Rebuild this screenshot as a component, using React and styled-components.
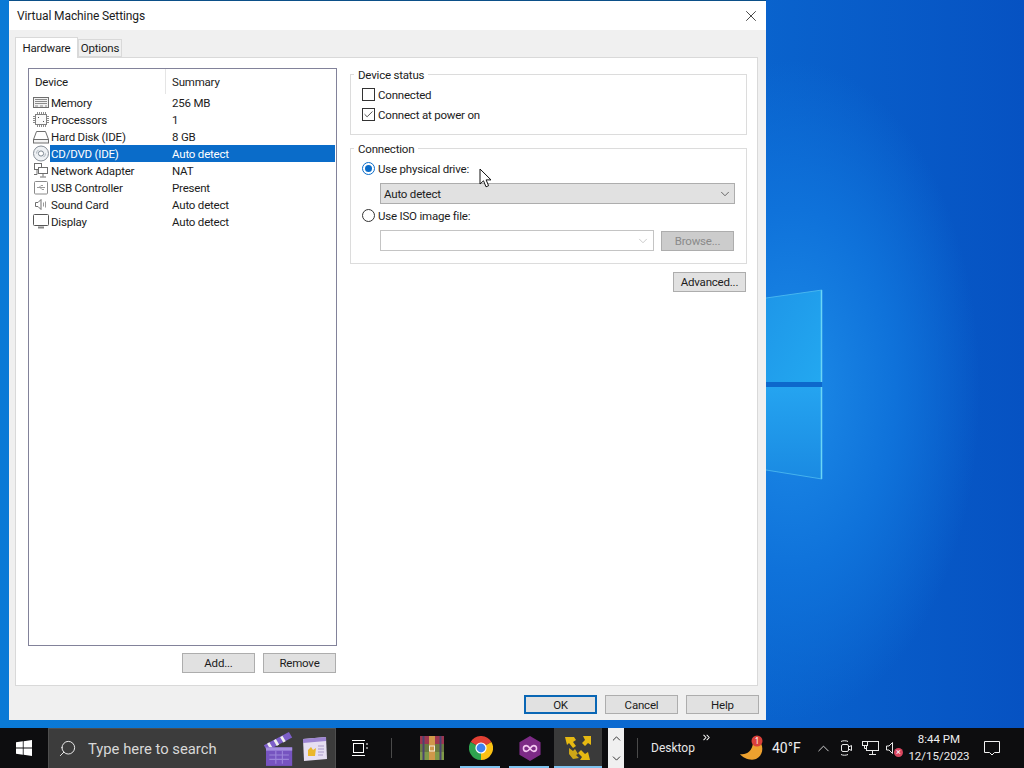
import React from "react";
import styled, { createGlobalStyle } from "styled-components";
import { ChevronDown, ChevronUp, ChevronsRight, Search, X, Check } from "lucide-react";

const devices = [
  { id: "memory", name: "Memory", summary: "256 MB" },
  { id: "cpu", name: "Processors", summary: "1" },
  { id: "disk", name: "Hard Disk (IDE)", summary: "8 GB" },
  { id: "cd", name: "CD/DVD (IDE)", summary: "Auto detect", selected: true },
  { id: "net", name: "Network Adapter", summary: "NAT" },
  { id: "usb", name: "USB Controller", summary: "Present" },
  { id: "sound", name: "Sound Card", summary: "Auto detect" },
  { id: "display", name: "Display", summary: "Auto detect" },
];

const DeviceIcon = ({ id }) => {
  const stroke = "#6e6e6e";
  return (
    <svg width="18" height="17" viewBox="0 0 18 17" fill="none" stroke={stroke} strokeWidth="1">
      {id === "memory" && (
        <>
          <rect x="1.5" y="3.5" width="15" height="10" fill="#f2f2f2" />
          <path d="M3 5.5h12M3 7.5h12M3 9.5h12" stroke="#8c8c8c" />
          <path d="M3 12h3M8 12h3M13 12h2" stroke="#8c8c8c" />
        </>
      )}
      {id === "cpu" && (
        <>
          <rect x="3.5" y="3.5" width="11" height="10" fill="#fafafa" stroke="#808080" />
          <path d="M5.5 1v2M7.5 1v2M9.5 1v2M11.5 1v2M13.5 1v2M5.5 14v2M7.5 14v2M9.5 14v2M11.5 14v2M13.5 14v2M1 5.5h2M1 7.5h2M1 9.5h2M1 11.5h2M15 5.5h2M15 7.5h2M15 9.5h2M15 11.5h2" stroke="#8a8a8a" />
          <path d="M6 6.5h1M11 10.5h1" stroke="#555" />
        </>
      )}
      {id === "disk" && (
        <>
          <path d="M1.5 11.5 4.5 3.5h9l3 8" />
          <rect x="1.5" y="11.5" width="15" height="3.5" fill="#f4f4f4" />
        </>
      )}
      {id === "cd" && (
        <>
          <circle cx="9" cy="8.5" r="7.5" fill="#eef1f4" stroke="#858d96" />
          <circle cx="9" cy="8.5" r="2.6" fill="#fff" stroke="#7c8791" />
          <path d="M4.5 8.5a4.5 4.5 0 0 1 2-3.6M13.5 8.5a4.5 4.5 0 0 1-2 3.6" stroke="#aab2ba" />
        </>
      )}
      {id === "net" && (
        <>
          <rect x="2.5" y="1.5" width="7" height="6" fill="#fff" />
          <rect x="6.5" y="5.5" width="9" height="6" fill="#fff" />
          <path d="M11 11.5v3M8 15h6M5 7.5v5h-3" />
        </>
      )}
      {id === "usb" && (
        <>
          <rect x="2.5" y="2.5" width="13" height="12.5" rx="1" fill="#fff" stroke="#8a8a8a" />
          <path d="M5 8.5h8M7 8.5l2-2h2M8 8.5l2 2h2" stroke="#9a9a9a" />
        </>
      )}
      {id === "sound" && (
        <>
          <path d="M3.5 6.5h2.5l3-3v10l-3-3H3.5z" fill="#fff" />
          <path d="M11.5 6.5v4M13.5 5.5v6" stroke="#999" />
        </>
      )}
      {id === "display" && (
        <>
          <rect x="1.5" y="1.5" width="15" height="11" rx="1" fill="#fff" stroke="#555" />
          <path d="M6 14.5h6" stroke="#888" strokeWidth="2" />
        </>
      )}
    </svg>
  );
};

const Wallpaper = () => (
  <WallpaperSvg viewBox="0 0 258 728" preserveAspectRatio="none">
    <defs>
      <linearGradient id="paneTop" x1="0" y1="0" x2="1" y2="1">
        <stop offset="0" stopColor="#1e96e8" />
        <stop offset="1" stopColor="#23a8f0" />
      </linearGradient>
      <linearGradient id="paneLow" x1="0" y1="0" x2="0" y2="1">
        <stop offset="0" stopColor="#25a4f0" />
        <stop offset="1" stopColor="#1a8ae2" />
      </linearGradient>
    </defs>
    <polygon points="0,298 56,290 56,382 0,382" fill="url(#paneTop)" />
    <polygon points="0,387 56,387 56,479 0,470" fill="url(#paneLow)" />
    <path d="M55.5 290v92M55.5 387v92" stroke="#6bd6f6" strokeWidth="1.5" fill="none" />
    <path d="M0 298 56 290M0 470 56 479" stroke="#58c4f2" strokeWidth="1" fill="none" opacity="0.7" />
    <rect x="0" y="382" width="56" height="5" fill="#0d68cc" />
  </WallpaperSvg>
);

const Clapper = () => (
  <svg width="34" height="36" viewBox="3 1 28 33">
    <path d="M4 14 27 2l3 5L7 19z" fill="#7d5fc9" />
    <path d="M8 12l3 5M14 9l3 5M20 6l3 5" stroke="#eee" strokeWidth="2.5" />
    <rect x="6" y="16" width="24" height="17" fill="#7654c0" />
    <path d="M6 16h24v3H6z" fill="#a68fe0" />
    <path d="M9 23h18M9 27h18M15 19v12M21 19v12" stroke="#9c85da" />
  </svg>
);

const News = () => (
  <svg width="28" height="28" viewBox="0 0 28 28">
    <path d="M3 4 26 2l1 22-23 2z" fill="#e6dff2" />
    <path d="M3 4 26 2v4L3 8z" fill="#9c84d2" />
    <path d="M8 15l3-3 2 3 3-2-1 8H8z" fill="#eab72c" />
    <path d="M18 11h6M18 14h6M18 17h6M18 20h5" stroke="#a99ac9" />
  </svg>
);

const TaskView = () => (
  <svg width="18" height="18" viewBox="0 0 18 18" fill="none" stroke="#fff" strokeWidth="1">
    <rect x="2.5" y="4.5" width="10" height="9" />
    <path d="M1 1.5h13M1 16.5h13M16 4v2M16 8v2" />
  </svg>
);

const WinRar = () => (
  <svg width="24" height="24" viewBox="0 0 24 24">
    <rect x="0" y="0" width="24" height="8" fill="#9c3650" />
    <rect x="0" y="8" width="24" height="8" fill="#6a7a40" />
    <rect x="0" y="16" width="24" height="8" fill="#7f9a48" />
    <path d="M3.5 0v24M20.5 0v24" stroke="#4a4470" strokeWidth="2" />
    <rect x="9" y="0" width="6" height="24" fill="#d0984a" />
    <rect x="9.5" y="10" width="5" height="5" fill="none" stroke="#f0e8d8" strokeWidth="1" />
  </svg>
);

const ChromeLogo = () => (
  <svg width="24" height="24" viewBox="0 0 24 24">
    <path d="M12 12 1.6 6A12 12 0 0 1 22.4 6z" fill="#e14034" />
    <path d="M12 12 22.4 6A12 12 0 0 1 12 24z" fill="#fbc113" />
    <path d="M12 12 12 24A12 12 0 0 1 1.6 6z" fill="#2fa44f" />
    <circle cx="12" cy="12" r="5.6" fill="#fff" />
    <circle cx="12" cy="12" r="4.4" fill="#3f83ee" />
  </svg>
);

const InfinityHex = () => (
  <svg width="24" height="25" viewBox="0 0 24 26">
    <polygon points="12,0 23,6.5 23,19.5 12,26 1,19.5 1,6.5" fill="#7d2a86" />
    <path d="M12 13c-1.5-2.2-2.6-3-3.8-3a3 3 0 0 0 0 6c1.2 0 2.3-.8 3.8-3s2.6-3 3.8-3a3 3 0 0 1 0 6c-1.2 0-2.3-.8-3.8-3z" fill="none" stroke="#f4c9f0" strokeWidth="1.6" />
  </svg>
);

const VmwareMark = () => (
  <svg width="26" height="26" viewBox="0 0 26 26" fill="#e6b912">
    <path d="M0 2h9l2 3-3 2 3 4-3 2-4-5-2 2z" />
    <path d="M26 1v9l-3-2-3 3-3-3 3-3-2-4z" />
    <path d="M25 25h-10l2-3-4-4 3-3 4 4 3-2z" />
    <path d="M4 13l4 3 2-2 3 5-2 1 3 3-6 1-4-5z" opacity="0.85" />
  </svg>
);

const Weather = () => (
  <svg width="26" height="26" viewBox="0 0 26 26">
    <path d="M1 19c6 1 12-2 13-11 1-2 4-3 7-1 4 5 3 14-4 17-6 2-13-1-16-5z" fill="#eda12f" />
    <circle cx="18" cy="6" r="5.5" fill="#d9403a" />
    <text x="18" y="9" textAnchor="middle" fontSize="8" fill="#fff" fontFamily="Noto Sans, sans-serif">1</text>
  </svg>
);

const TrayIcon = ({ kind }) => (
  <svg width="20" height="20" viewBox="0 0 20 20" fill="none" stroke="#e8e8e8" strokeWidth="1">
    {kind === "meet" && (
      <>
        <rect x="4.5" y="6.5" width="7" height="7" rx="1.5" />
        <path d="M11.5 9l3-1.5v5l-3-1.5M4 3.5c2-1 5-1 7 0M4 16.5c2 1 5 1 7 0" />
      </>
    )}
    {kind === "network" && (
      <>
        <rect x="5.5" y="3.5" width="12" height="9" />
        <rect x="1.5" y="3.5" width="5" height="4" fill="#0d0d0f" />
        <path d="M11.5 12.5v4M8 16.5h7M3.5 7.5v3h2" />
      </>
    )}
    {kind === "volume" && <path d="M2.5 8h2.5l3.5-3.5v11L5 12H2.5z" />}
  </svg>
);

const Cursor = () => (
  <CursorMark width="14" height="20" viewBox="0 0 14 20">
    <path d="M1 1v15l3.5-3.2 2.5 6 2.6-1.1-2.5-5.8H12z" fill="#fff" stroke="#111" strokeWidth="1" />
  </CursorMark>
);

export default function App() {
  return (
    <Screen>
      <GlobalStyle />
      <Desktop>
        <Wallpaper />
        <Dialog>
          <TitleBar>
            <span>Virtual Machine Settings</span>
            <CloseButton>
              <X size={18} strokeWidth={1.1} />
            </CloseButton>
          </TitleBar>
          <TabRow>
            <Tab $active>Hardware</Tab>
            <Tab>Options</Tab>
          </TabRow>
          <Panel>
            <LeftColumn>
              <DeviceList>
                <ListHeader>
                  <HeaderCell $w={137}>Device</HeaderCell>
                  <HeaderCell>Summary</HeaderCell>
                </ListHeader>
                {devices.map((d) => (
                  <DeviceRow key={d.id}>
                    <RowIcon>
                      <DeviceIcon id={d.id} />
                    </RowIcon>
                    <RowBody $selected={d.selected}>
                      <RowName>{d.name}</RowName>
                      <span>{d.summary}</span>
                    </RowBody>
                  </DeviceRow>
                ))}
              </DeviceList>
              <ListActions>
                <Button>Add...</Button>
                <Button>Remove</Button>
              </ListActions>
            </LeftColumn>
            <RightColumn>
              <Group>
                <Legend>Device status</Legend>
                <OptionRow $top={3}>
                  <CheckBox />
                  <OptionLabel>Connected</OptionLabel>
                </OptionRow>
                <OptionRow>
                  <CheckBox>
                    <Check size={13} strokeWidth={1.7} color="#222" />
                  </CheckBox>
                  <OptionLabel>Connect at power on</OptionLabel>
                </OptionRow>
                <GroupEnd $h={10} />
              </Group>
              <Group>
                <Legend>Connection</Legend>
                <OptionRow $top={3}>
                  <Radio $on />
                  <OptionLabel>Use physical drive:</OptionLabel>
                </OptionRow>
                <DriveSelect>
                  Auto detect
                  <ChevronDown size={14} strokeWidth={1.2} color="#333" />
                </DriveSelect>
                <OptionRow $top={1}>
                  <Radio />
                  <OptionLabel>Use ISO image file:</OptionLabel>
                </OptionRow>
                <IsoRow>
                  <IsoCombo>
                    <ChevronDown size={14} strokeWidth={1.2} color="#b5b5b5" />
                  </IsoCombo>
                  <Button $disabled>Browse...</Button>
                </IsoRow>
                <GroupEnd $h={12} />
              </Group>
              <AdvancedRow>
                <Button>Advanced...</Button>
              </AdvancedRow>
            </RightColumn>
          </Panel>
          <Footer>
            <Button $primary $h={19}>OK</Button>
            <Button $h={19}>Cancel</Button>
            <Button $h={19}>Help</Button>
          </Footer>
        </Dialog>
      </Desktop>
      <Taskbar>
        <Slot $w={48}>
          <svg width="16" height="16" viewBox="0 0 16 16" fill="#fff">
            <path d="M0 2.3 6.8 1.3v6.3H0zM7.6 1.2 16 0v7.6H7.6zM0 8.4h6.8v6.3L0 13.7zM7.6 8.4H16V16l-8.4-1.2z" />
          </svg>
        </Slot>
        <SearchBox>
          <SearchGlyph><Search size={19} strokeWidth={1.2} color="#f0f0f0" /></SearchGlyph>
          <SearchText>Type here to search</SearchText>
          <SearchArt>
            <Clapper />
            <News />
          </SearchArt>
        </SearchBox>
        <Slot $w={48}><TaskView /></Slot>
        <Divider />
        <Slot $w={49} $ml={15}><WinRar /></Slot>
        <Slot $w={49} $running><ChromeLogo /></Slot>
        <Slot $w={49} $running><InfinityHex /></Slot>
        <Slot $w={48} $active><VmwareMark /></Slot>
        <Scroller>
          <ChevronUp size={13} strokeWidth={1.8} color="#333" />
          <ChevronDown size={13} strokeWidth={1.8} color="#333" />
        </Scroller>
        <Divider $ml={13} />
        <DesktopLabel>Desktop</DesktopLabel>
        <Chevrons><ChevronsRight size={11} strokeWidth={2.2} color="#fff" /></Chevrons>
        <Slot $w={26} $ml={27}><Weather /></Slot>
        <Temperature>40°F</Temperature>
        <Slot $w={24} $ml={11}><ChevronUp size={19} strokeWidth={1.1} color="#eee" /></Slot>
        <Slot $w={24}><TrayIcon kind="meet" /></Slot>
        <Slot $w={24}><TrayIcon kind="network" /></Slot>
        <Slot $w={22}>
          <TrayIcon kind="volume" />
          <MuteBadge>×</MuteBadge>
        </Slot>
        <Clock>
          <span>8:44 PM</span>
          <span>12/15/2023</span>
        </Clock>
        <Slot $w={40}>
          <svg width="18" height="18" viewBox="0 0 18 18" fill="none" stroke="#f2f2f2" strokeWidth="1">
            <path d="M1.5 2.5h15v11h-5l-2.5 2.5-2.5-2.5h-5z" />
          </svg>
        </Slot>
      </Taskbar>
      <Cursor />
    </Screen>
  );
}

const GlobalStyle = createGlobalStyle`
  html, body {
    margin: 0;
    padding: 0;
    overflow: hidden;
  }
  * {
    box-sizing: border-box;
  }
`;

const Screen = styled.div`
  position: relative;
  width: 1024px;
  height: 768px;
  display: flex;
  flex-direction: column;
  font-family: Roboto, "Noto Sans", "Liberation Sans", sans-serif;
  font-size: 11.5px;
  letter-spacing: -0.2px;
  color: #1c1c1c;
  overflow: hidden;
`;

const Desktop = styled.div`
  position: relative;
  height: 728px;
  padding-left: 9px;
  background:
    radial-gradient(ellipse 190px 330px at 790px 390px, #1d8ce8 0%, #0f72da 55%, transparent 100%),
    linear-gradient(90deg, #0a7ad6 0%, #0a66cf 70%, #0652c2 100%);
`;

const WallpaperSvg = styled.svg`
  position: absolute;
  left: 766px;
  top: 0;
  width: 258px;
  height: 728px;
`;

const Dialog = styled.div`
  position: relative;
  width: 757px;
  height: 720px;
  background: #f0f0f0;
  display: flex;
  flex-direction: column;
  border-top: 1px solid #0b4f88;
`;

const TitleBar = styled.div`
  height: 29px;
  flex: none;
  background: #fff;
  display: flex;
  align-items: center;
  justify-content: space-between;
  padding: 0 6px 0 8px;
  font-size: 12px;
  letter-spacing: -0.1px;
`;

const CloseButton = styled.div`
  display: flex;
  color: #222;
`;

const TabRow = styled.div`
  height: 27px;
  flex: none;
  display: flex;
  align-items: flex-end;
  padding-left: 6px;
`;

const Tab = styled.div`
  height: ${({ $active }) => ($active ? "21px" : "18px")};
  width: ${({ $active }) => ($active ? "63px" : "44px")};
  margin-bottom: ${({ $active }) => ($active ? "-1px" : "0")};
  position: relative;
  z-index: ${({ $active }) => ($active ? 1 : 0)};
  display: flex;
  align-items: center;
  justify-content: center;
  background: ${({ $active }) => ($active ? "#fff" : "#f0f0f0")};
  border: 1px solid #d9d9d9;
  border-bottom: ${({ $active }) => ($active ? "none" : "1px solid #d9d9d9")};
`;

const Panel = styled.div`
  height: 629px;
  flex: none;
  width: 743px;
  margin-left: 6px;
  padding: 10px 0 11px 12px;
  display: flex;
  gap: 13px;
  background: #fff;
  border: 1px solid #d9d9d9;
`;

const LeftColumn = styled.div`
  width: 309px;
  display: flex;
  flex-direction: column;
`;

const DeviceList = styled.div`
  height: 578px;
  border: 1px solid #82829a;
  padding-right: 1px;
`;

const ListHeader = styled.div`
  height: 25px;
  display: flex;
  align-items: center;
`;

const HeaderCell = styled.div`
  width: ${({ $w }) => ($w ? `${$w}px` : "auto")};
  height: 100%;
  display: flex;
  align-items: center;
  padding-left: 6px;
  border-right: ${({ $w }) => ($w ? "1px solid #e5e5e5" : "none")};
`;

const DeviceRow = styled.div`
  height: 17px;
  display: flex;
  align-items: center;
`;

const RowIcon = styled.div`
  width: 21px;
  padding-left: 3px;
  display: flex;
  flex: none;
`;

const RowBody = styled.div`
  flex: 1;
  height: 100%;
  display: flex;
  align-items: center;
  padding-left: 1px;
  background: ${({ $selected }) => ($selected ? "#0a6cc9" : "transparent")};
  color: ${({ $selected }) => ($selected ? "#fff" : "inherit")};
`;

const RowName = styled.span`
  width: 121px;
  flex: none;
`;

const ListActions = styled.div`
  display: flex;
  justify-content: flex-end;
  gap: 8px;
  margin-top: 7px;
  padding-right: 1px;
`;

const Button = styled.div`
  width: 73px;
  height: ${({ $h }) => ($h ? `${$h}px` : "20px")};
  flex: none;
  display: flex;
  align-items: center;
  justify-content: center;
  background: ${({ $disabled }) => ($disabled ? "#cccccc" : "#e1e1e1")};
  border: ${({ $primary }) => ($primary ? "2px solid #0a67b5" : "1px solid #adadad")};
  color: ${({ $disabled }) => ($disabled ? "#8a8a8a" : "inherit")};
`;

const RightColumn = styled.div`
  width: 397px;
  display: flex;
  flex-direction: column;
  margin-top: -1px;
`;

const Group = styled.fieldset`
  margin: 0 0 6px;
  padding: 0 11px;
  border: 1px solid #dcdcdc;
  min-width: 0;
`;

const Legend = styled.legend`
  padding: 2px 4px 0;
  margin-left: -8px;
  line-height: 12px;
`;

const GroupEnd = styled.div`
  height: ${({ $h }) => $h}px;
`;

const OptionRow = styled.div`
  height: 20px;
  margin-top: ${({ $top }) => ($top ? `${$top}px` : "0")};
  display: flex;
  align-items: center;
  gap: 3px;
`;

const OptionLabel = styled.span`
  padding-top: 1px;
`;

const CheckBox = styled.div`
  width: 13px;
  height: 13px;
  border: 1px solid #333;
  background: #fff;
  display: flex;
  align-items: center;
  justify-content: center;
`;

const Radio = styled.div`
  width: 13px;
  height: 13px;
  border-radius: 50%;
  border: 1px solid ${({ $on }) => ($on ? "#0a6cc9" : "#333")};
  background: #fff;
  display: flex;
  align-items: center;
  justify-content: center;
  &::after {
    content: "";
    width: 7px;
    height: 7px;
    border-radius: 50%;
    background: ${({ $on }) => ($on ? "#0a6cc9" : "transparent")};
  }
`;

const DriveSelect = styled.div`
  height: 21px;
  width: 355px;
  margin: 5px 0 0 18px;
  padding: 0 2px 0 3px;
  display: flex;
  align-items: center;
  justify-content: space-between;
  background: #e1e1e1;
  border: 1px solid #adadad;
`;

const IsoRow = styled.div`
  display: flex;
  align-items: center;
  gap: 7px;
  margin: 5px 0 0 18px;
`;

const IsoCombo = styled.div`
  width: 274px;
  height: 21px;
  padding-right: 3px;
  display: flex;
  align-items: center;
  justify-content: flex-end;
  background: #fff;
  border: 1px solid #c4c4c4;
`;

const AdvancedRow = styled.div`
  display: flex;
  justify-content: flex-end;
  margin-top: 2px;
  padding-right: 1px;
`;

const Footer = styled.div`
  flex: 1;
  display: flex;
  justify-content: flex-end;
  gap: 8px;
  padding: 9px 7px 0 0;
  align-items: flex-start;
`;

const Taskbar = styled.div`
  height: 40px;
  flex: none;
  display: flex;
  align-items: stretch;
  background: #0d0d0f;
  color: #eee;
  letter-spacing: 0;
`;

const Slot = styled.div`
  position: relative;
  width: ${({ $w }) => $w}px;
  margin-left: ${({ $ml }) => ($ml ? `${$ml}px` : "0")};
  flex: none;
  display: flex;
  align-items: center;
  justify-content: center;
  background: ${({ $active }) => ($active ? "#3a3a3a" : "transparent")};
  &::after {
    content: "";
    position: absolute;
    bottom: 0;
    left: ${({ $active }) => ($active ? "0" : "4px")};
    right: ${({ $active }) => ($active ? "0" : "5px")};
    height: 2px;
    background: ${({ $running, $active }) => ($running || $active ? "#7fc3ef" : "transparent")};
  }
`;

const SearchBox = styled.div`
  width: 288px;
  flex: none;
  display: flex;
  align-items: center;
  padding-left: 9px;
  background: #3c3c3c;
  border: 1px solid #4e4e4e;
  border-bottom: none;
`;

const SearchGlyph = styled.span`
  display: flex;
  transform: scaleX(-1);
`;

const SearchText = styled.span`
  margin-left: 11px;
  font-size: 14.8px;
  color: #d8d8d8;
`;

const SearchArt = styled.div`
  margin-left: auto;
  display: flex;
  align-items: center;
  gap: 5px;
  padding-right: 7px;
`;

const Divider = styled.div`
  width: 1px;
  margin: 10px 0 10px ${({ $ml }) => ($ml ? `${$ml}px` : "7px")};
  background: #4a4a4a;
`;

const Scroller = styled.div`
  width: 16px;
  margin-left: 6px;
  flex: none;
  display: flex;
  flex-direction: column;
  align-items: center;
  justify-content: space-around;
  background: #f0f0f0;
`;

const DesktopLabel = styled.span`
  width: 43px;
  flex: none;
  margin-left: 13px;
  font-size: 12px;
  align-self: center;
  color: #e6e6e6;
  white-space: nowrap;
`;

const Chevrons = styled.div`
  margin: 4px 0 0 7px;
  display: flex;
`;

const Temperature = styled.span`
  width: 28px;
  flex: none;
  margin-left: 7px;
  font-size: 14px;
  align-self: center;
  white-space: nowrap;
`;

const MuteBadge = styled.span`
  position: absolute;
  right: 2px;
  bottom: 11px;
  width: 9px;
  height: 9px;
  border-radius: 50%;
  background: #d8465f;
  color: #fff;
  font-size: 9px;
  line-height: 9px;
  text-align: center;
`;

const Clock = styled.div`
  width: 66px;
  margin-left: 1px;
  flex: none;
  display: flex;
  flex-direction: column;
  align-items: center;
  justify-content: center;
  gap: 2px;
  font-size: 11.5px;
  line-height: 15px;
  color: #eee;
`;

const CursorMark = styled.svg`
  position: absolute;
  left: 479px;
  top: 168px;
`;
